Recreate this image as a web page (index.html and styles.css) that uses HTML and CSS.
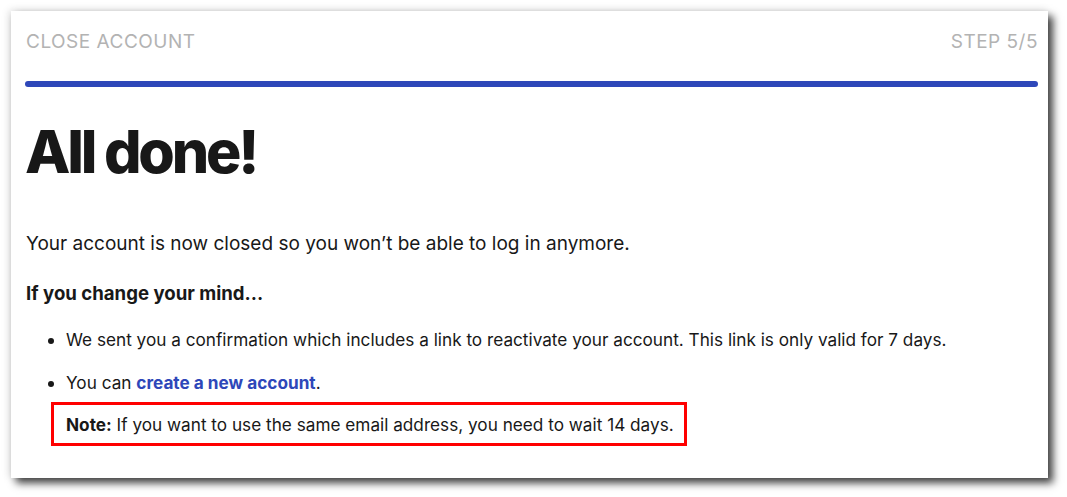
FILE: index.html
```html
<!DOCTYPE html>
<html lang="en">
<head>
<meta charset="utf-8">
<title>Close account</title>
<link rel="stylesheet" href="styles.css">
</head>
<body>
<div class="card">
  <div class="header">
    <span class="label">CLOSE ACCOUNT</span>
    <span class="label">STEP 5/5</span>
  </div>
  <div class="progress"></div>
  <h1 class="title">All done!</h1>
  <p class="lead">Your account is now closed so you won’t be able to log in anymore.</p>
  <h2 class="subtitle">If you change your mind...</h2>
  <ul class="list">
    <li>We sent you a confirmation which includes a link to reactivate your account. This link is only valid for 7 days.</li>
    <li>You can <a class="link" href="#">create a new account</a>.</li>
  </ul>
  <div class="note"><strong>Note:</strong> If you want to use the same email address, you need to wait 14 days.</div>
</div>
</body>
</html>
```
FILE: styles.css
```css
html, body {
  margin: 0;
  padding: 0;
  background: #fff;
}
body {
  min-height: 497px;
  font-family: "Inter", "Lato", sans-serif;
  color: #181818;
}
.card {
  margin: 11px 0 0 11px;
  width: 1037px;
  height: 467px;
  box-sizing: border-box;
  padding: 18px 10px 0 14px;
  background: #fff;
  box-shadow: 5px 5px 8px rgba(0,0,0,0.75), -2px -1px 8px rgba(0,0,0,0.12);
}
.header {
  display: flex;
  justify-content: space-between;
  padding-left: 1px;
  height: 24px;
  align-items: center;
}
.label {
  font-size: 19px;
  letter-spacing: 0.5px;
  color: #b3b3b3;
}
.progress {
  margin-top: 28px;
  height: 6px;
  border-radius: 3px;
  background: #2e47b9;
}
.title {
  margin: 30px 0 0 0;
  font-size: 59px;
  font-weight: 800;
  letter-spacing: -3.2px;
  line-height: 70px;
}
.lead {
  margin: 44px 0 0 1px;
  font-size: 19px;
  line-height: 26px;
}
.subtitle {
  margin: 23px 0 0 1px;
  font-size: 18.6px;
  font-weight: 700;
  line-height: 26px;
}
.list {
  margin: 21px 0 0 0;
  padding-left: 41px;
  font-size: 17.2px;
  line-height: 26px;
}
.list li {
  margin-bottom: 17px;
}
.list li:last-child {
  margin-bottom: 0;
}
.link {
  color: #2e47b9;
  font-weight: 700;
  text-decoration: none;
}
.note {
  margin: 6px 0 0 26px;
  width: 636px;
  height: 44px;
  box-sizing: border-box;
  border: 3px solid #ff0000;
  padding: 0 0 0 12px;
  font-size: 17.2px;
  line-height: 40px;
}
.note strong {
  font-weight: 700;
}
```
